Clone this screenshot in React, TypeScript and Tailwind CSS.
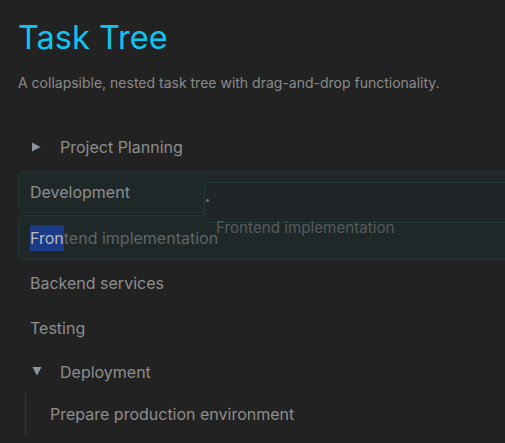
import React from 'react';

type Row = {
  id: string;
  label: string;
  toggle?: 'open' | 'closed';
};

const font = { fontFamily: 'Inter, "Noto Sans", sans-serif' };

const RightTriangle = () => (
  <svg width="9" height="10" viewBox="0 0 9 10" className="ml-[2px]">
    <path d="M0 0.5 L8.5 5 L0 9.5 Z" fill="#8b97a3" />
  </svg>
);

const DownTriangle = () => (
  <svg width="10" height="9" viewBox="0 0 10 9" className="ml-[2px]">
    <path d="M0.5 0 L9.5 0 L5 8.5 Z" fill="#8b97a3" />
  </svg>
);

const ToggleRow: React.FC<Row & { className?: string }> = ({ label, toggle, className }) => (
  <div className={`flex items-center pl-3 text-[16px] text-[#8e8e8e] ${className ?? ''}`}>
    <span className="flex w-[18px] items-center">
      {toggle === 'open' ? <DownTriangle /> : <RightTriangle />}
    </span>
    <span className="ml-3">{label}</span>
  </div>
);

export default function App() {
  return (
    <div
      className="relative min-h-[443px] w-full overflow-hidden bg-[#222222] pl-[18px] pt-[18px]"
      style={font}
    >
      <h1 className="text-[32.5px] leading-[40px] text-[#10c4f2]">Task Tree</h1>
      <p className="mt-[15px] text-[14px] leading-[20px] text-[#8a8a8a]">
        A collapsible, nested task tree with drag-and-drop functionality.
      </p>

      <div className="mt-[30px] w-[620px]">
        <ToggleRow id="plan" label="Project Planning" toggle="closed" className="h-[48px]" />

        {/* Drop target */}
        <div className="flex h-[42px] items-center rounded-[5px] border border-[#223334] bg-[#1f2829] pl-[11px] text-[16px] text-[#8e8e8e]">
          Development
        </div>

        {/* Item being dragged */}
        <div className="mt-[2px] flex h-[45px] items-center rounded-[5px] border border-[#223334] bg-[#1f2829] pl-[11px] text-[16px] text-[#5f6566]">
          <span className="bg-[#1c3b86] py-[3px] leading-[20px] text-[#b8bcc4]">Fron</span>
          <span>tend implementation</span>
        </div>

        <div className="flex h-[45px] items-center pl-3 text-[16px] text-[#8e8e8e]">Backend services</div>
        <div className="flex h-[45px] items-center pl-3 text-[16px] text-[#8e8e8e]">Testing</div>

        <ToggleRow id="deploy" label="Deployment" toggle="open" className="h-[43px]" />
        <div className="ml-[7px] border-l border-[#363636]">
          <div className="flex h-[42px] items-center pl-[24px] text-[16px] text-[#8e8e8e]">
            Prepare production environment
          </div>
        </div>
      </div>

      {/* Drag overlay */}
      <div className="absolute left-[204px] top-[182px] h-[41px] w-[400px] rounded-[6px] border border-[#1f3a3e] bg-[#202628]">
        <span className="absolute left-[1px] top-[16px] h-[3px] w-[3px] rounded-full bg-[#6b6f70]" />
        <span className="absolute left-[11px] top-[35px] whitespace-nowrap text-[15.2px] leading-[20px] text-[#555b5c]">
          Frontend implementation
        </span>
      </div>
    </div>
  );
}
